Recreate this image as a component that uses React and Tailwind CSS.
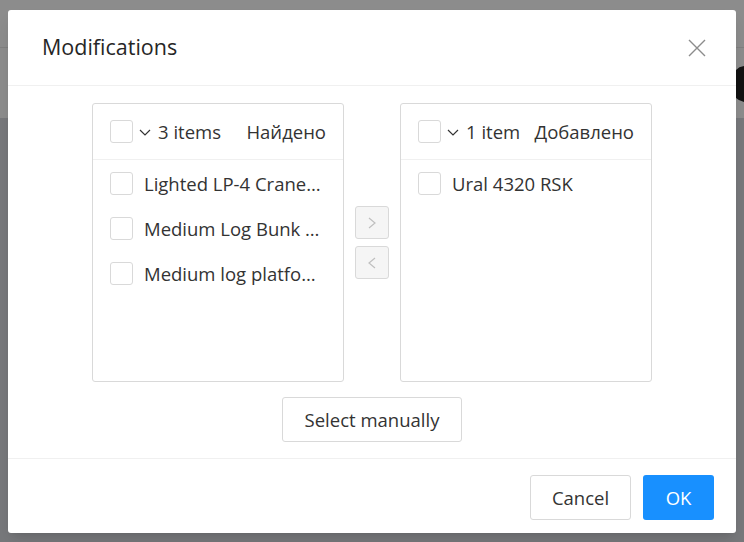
import React from 'react';

const font = { fontFamily: '"Open Sans", "Noto Sans", sans-serif' };

const Checkbox = () => (
  <span className="inline-block w-[23px] h-[23px] shrink-0 rounded-[3px] border border-[#d9d9d9] bg-white"></span>
);

const Chevron = ({ dir }) => (
  <svg width="12" height="16" viewBox="0 0 12 16" fill="none" stroke="currentColor" strokeWidth="1.2">
    {dir === 'right' ? <path d="M3 3l6 5-6 5" /> : <path d="M9 3l-6 5 6 5" />}
  </svg>
);

const TransferList = ({ count, title, items }) => (
  <div className="w-[252px] h-[279px] border border-[#d9d9d9] rounded-[3px] flex flex-col">
    <div className="h-[56px] border-b border-[#f0f0f0] flex items-center pl-[17px] pr-[17px] text-[18.5px] text-[#333]">
      <Checkbox />
      <svg width="12" height="10" viewBox="0 0 12 10" className="ml-[6px] mr-[7px]" fill="none" stroke="#333" strokeWidth="1.2">
        <path d="M1 3l5 5 5-5" />
      </svg>
      <span>{count}</span>
      <span className="ml-auto">{title}</span>
    </div>
    <div className="pt-[1px]">
      {items.map((it) => (
        <div key={it} className="h-[45px] flex items-center pl-[17px] pr-[20px] text-[18.5px] text-[#333]">
          <Checkbox />
          <span className="ml-[11px] truncate">{it}</span>
        </div>
      ))}
    </div>
  </div>
);

export default function App() {
  return (
    <div className="relative w-full h-[542px] overflow-hidden bg-[#d9dbe0]" style={font}>
      {/* page behind the mask */}
      <div className="bg-white h-[118px]">
        <div className="h-[48px] border-b border-[#e8e8e8] relative">
          <span className="absolute left-[115px] top-[2px] text-[22px] font-bold text-black">Trader</span>
          <span className="absolute left-[553px] top-[2px] text-[22px] font-bold text-black">Trail</span>
        </div>
        <div className="absolute left-[731px] top-[66px] w-[30px] h-[36px] rounded-full bg-[#222]"></div>
      </div>

      <div className="absolute inset-0 bg-black/45"></div>

      {/* modal */}
      <div className="absolute left-[8px] top-[10px] w-[728px] bg-white rounded-[3px] shadow-lg">
        <div className="h-[76px] border-b border-[#f0f0f0] flex items-center pl-[34px] pr-[30px]">
          <h2 className="text-[21.5px] font-medium text-[#262626]">Modifications</h2>
          <button className="ml-auto text-[#8c8c8c]">
            <svg width="18" height="18" viewBox="0 0 18 18" stroke="currentColor" strokeWidth="1.4" fill="none">
              <path d="M1 1l16 16M17 1L1 17" />
            </svg>
          </button>
        </div>

        <div className="pt-[17px] pb-[16px] flex flex-col items-center">
          <div className="flex items-center">
            <TransferList
              count="3 items"
              title="Найдено"
              items={['Lighted LP-4 Crane Platform', 'Medium Log Bunk Platform', 'Medium log platform']}
            />
            <div className="flex flex-col gap-[7px] mx-[11px]">
              <button className="w-[34px] h-[33px] flex items-center justify-center bg-[#f5f5f5] border border-[#d9d9d9] rounded-[3px] text-[#bfbfbf]">
                <Chevron dir="right" />
              </button>
              <button className="w-[34px] h-[33px] flex items-center justify-center bg-[#f5f5f5] border border-[#d9d9d9] rounded-[3px] text-[#bfbfbf]">
                <Chevron dir="left" />
              </button>
            </div>
            <TransferList count="1 item" title="Добавлено" items={['Ural 4320 RSK']} />
          </div>
          <button className="mt-[15px] w-[180px] h-[45px] border border-[#d9d9d9] rounded-[3px] text-[18.5px] text-[#333] bg-white">
            Select manually
          </button>
        </div>

        <div className="border-t border-[#f0f0f0] pt-[16px] pb-[13px] pr-[22px] flex justify-end gap-[12px]">
          <button className="w-[101px] h-[45px] border border-[#d9d9d9] rounded-[3px] text-[18.5px] text-[#333] bg-white">
            Cancel
          </button>
          <button className="w-[71px] h-[45px] rounded-[3px] text-[18.5px] text-white bg-[#1890ff]">
            OK
          </button>
        </div>
      </div>
    </div>
  );
}
